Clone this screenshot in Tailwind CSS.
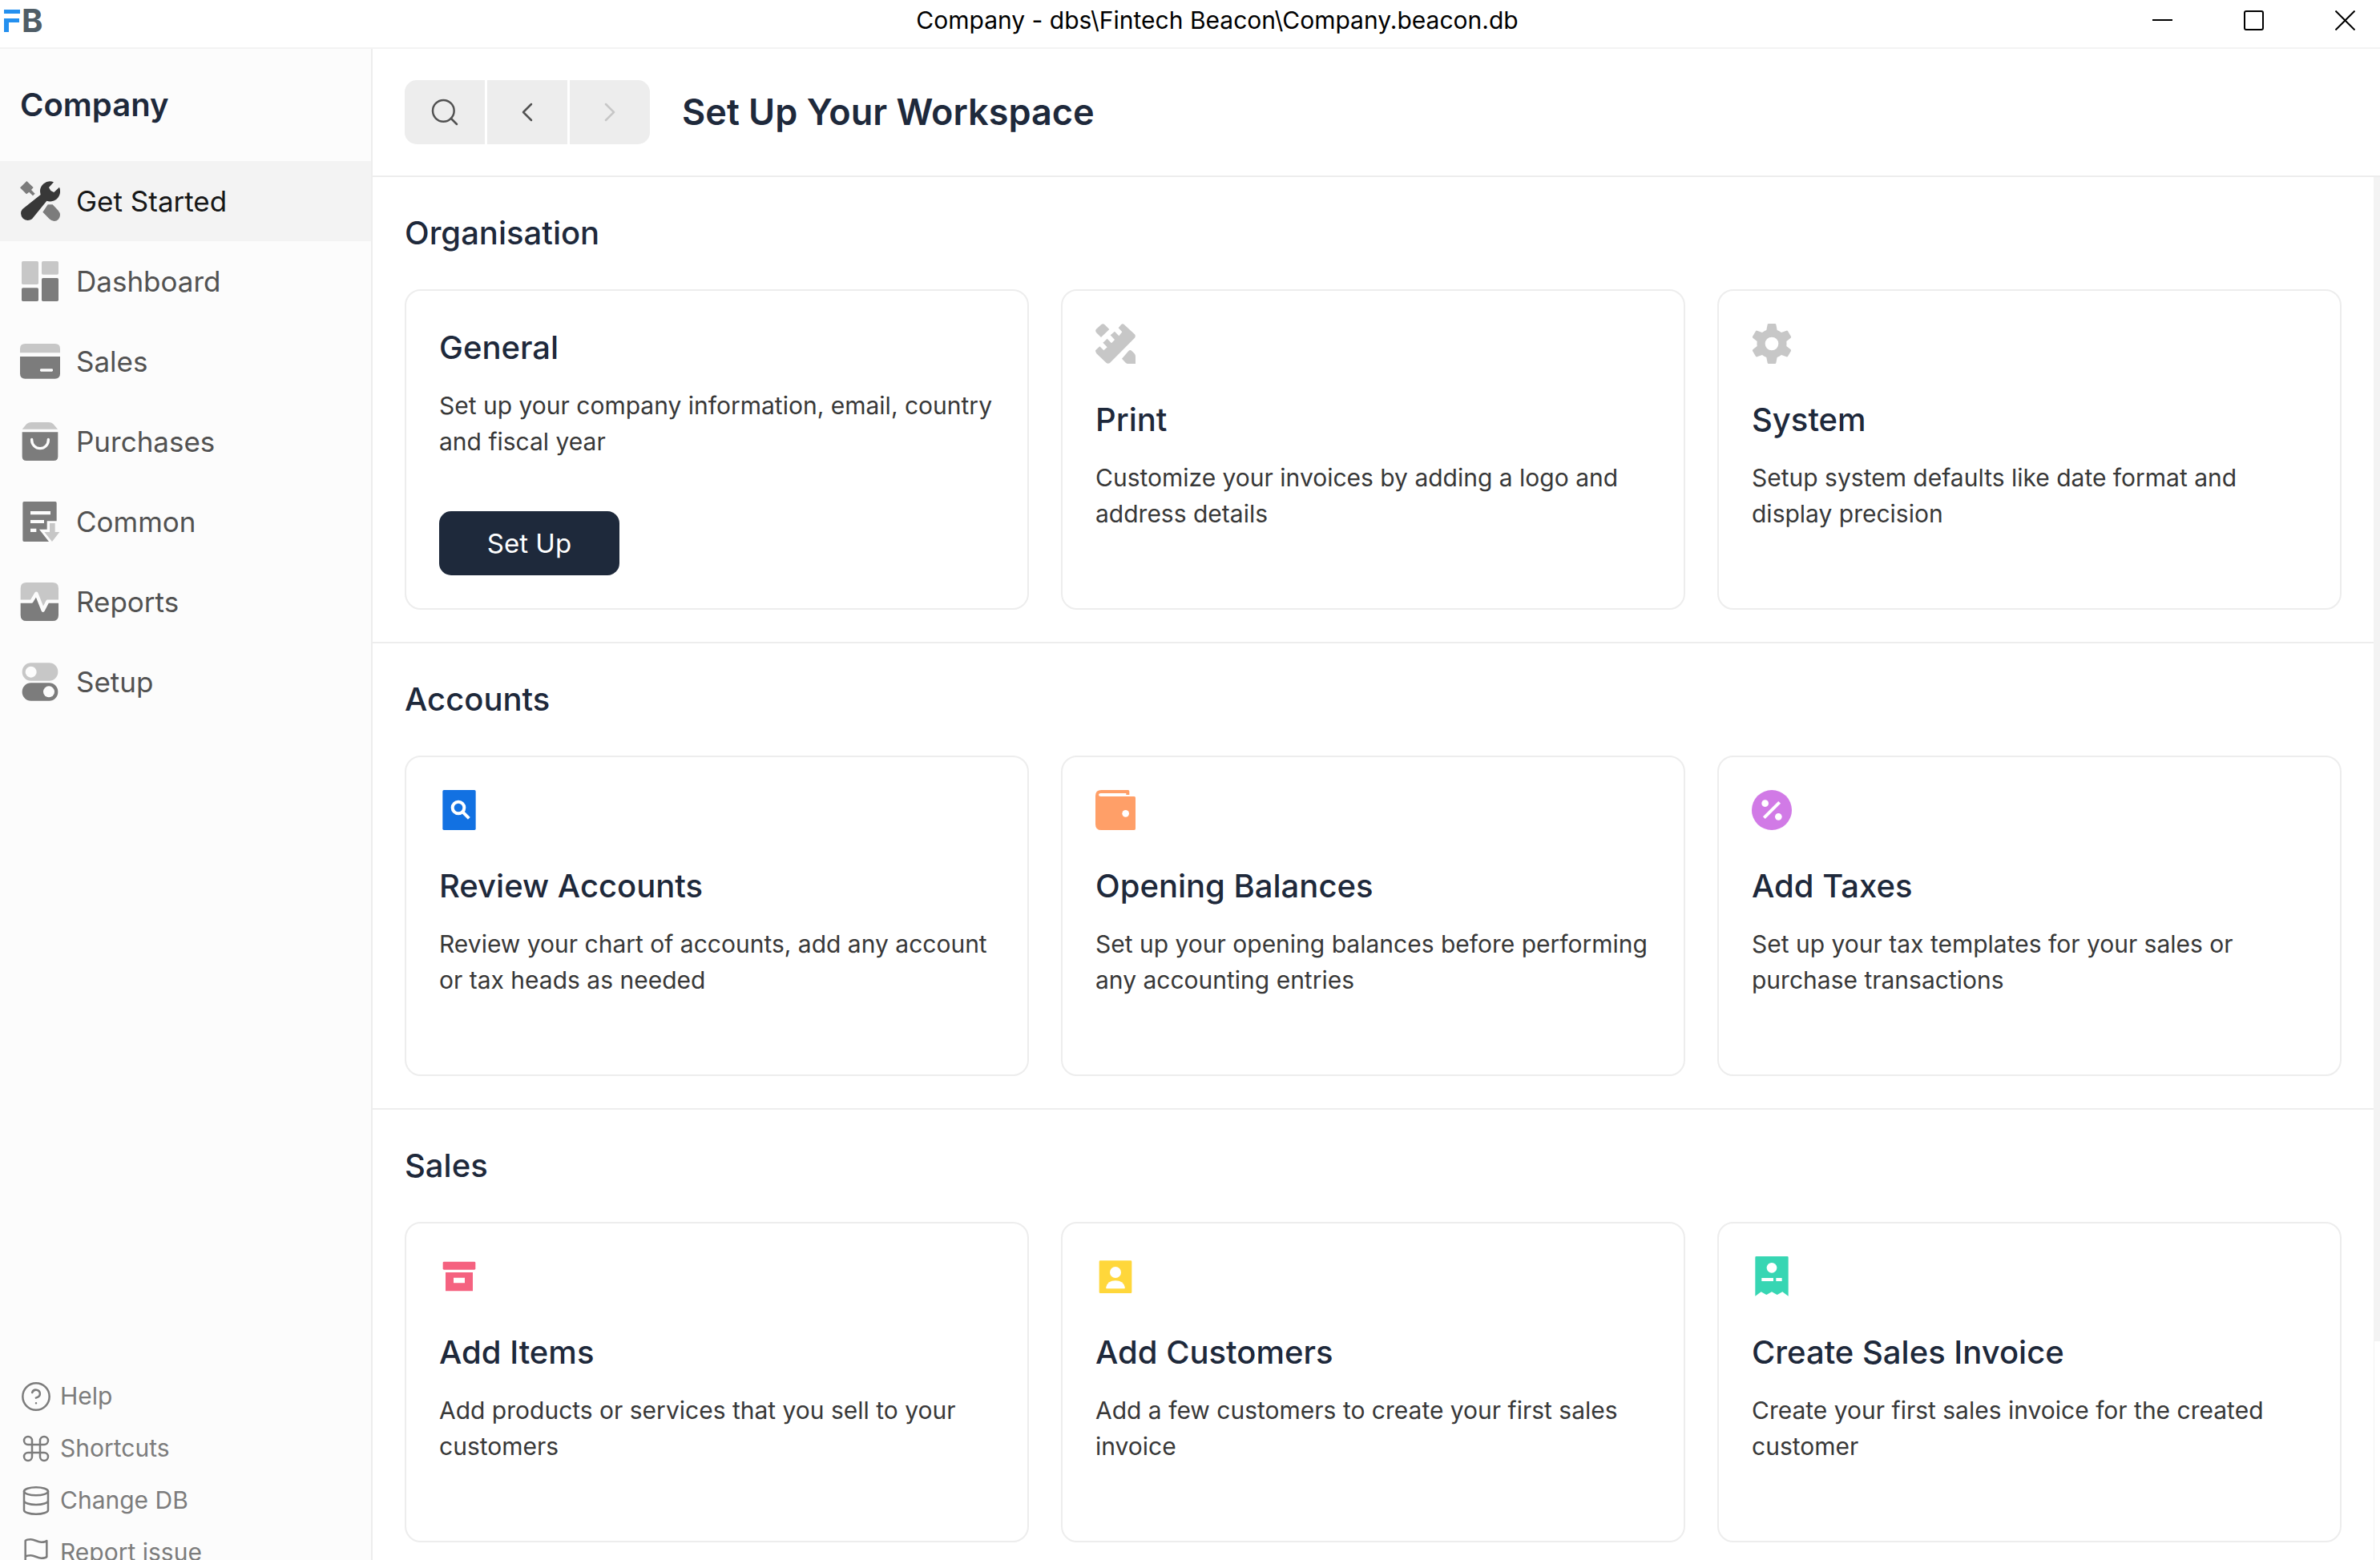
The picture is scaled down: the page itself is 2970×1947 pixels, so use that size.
<!DOCTYPE html>
<html lang="en">
<head>
<meta charset="utf-8">
<meta name="viewport" content="width=device-width, initial-scale=1">
<title>Company</title>
<script src="https://cdn.jsdelivr.net/npm/@tailwindcss/browser@4"></script>
</head>
<body class="flex h-screen flex-col overflow-hidden bg-white font-[Inter,sans-serif] text-[30px] leading-[45px] text-[#383838]">

<!-- Window title bar -->
<header class="relative flex h-[61px] shrink-0 items-center border-b-2 border-[#f3f3f3] pb-2 text-black">
  <div class="flex w-[68px] shrink-0 items-center gap-[2px] pl-[5px]" aria-label="Fintech Beacon">
    <svg class="h-7 w-5" viewBox="0 0 20 28" fill="#2490ef" aria-hidden="true"><rect width="20" height="5"/><path d="M0 11H19V16H6V28H0Z"/></svg>
    <span class="text-[40px] font-bold text-[#505d66]">B</span>
  </div>
  <div class="flex-1 text-center">Company - dbs\Fintech Beacon\Company.beacon.db</div>
  <div class="absolute right-[31px] flex items-center gap-[89px]">
    <button class="block" aria-label="Minimize"><svg class="size-[25px]" viewBox="0 0 25 25" stroke="#000" stroke-width="2"><path d="M0 12H25"/></svg></button>
    <button class="block" aria-label="Maximize"><svg class="size-[25px]" viewBox="0 0 25 25" fill="none" stroke="#000" stroke-width="2"><rect x="1" y="1" width="23" height="23" rx="2"/></svg></button>
    <button class="block" aria-label="Close"><svg class="size-[25px]" viewBox="0 0 25 25" stroke="#000" stroke-width="2"><path d="M.5 .5L24.5 24.5M24.5 .5L.5 24.5"/></svg></button>
  </div>
</header>

<div class="flex h-screen shrink-0">

  <!-- Sidebar -->
  <aside class="flex w-[465px] shrink-0 flex-col justify-between border-r-2 border-[#ededed] bg-[#fcfcfc] pb-12">
    <div>
      <div class="flex h-[140px] items-center px-[25px] pb-[2px] text-[40px] font-semibold text-[#1e293b]">Company</div>
      <nav class="flex flex-col text-[35px] text-[#525252]">
        <a href="#" class="flex h-[100px] items-center gap-5 bg-[#f3f3f3] px-[25px] text-[#171717]">
          <svg class="size-[50px]" viewBox="0 0 150 150" aria-hidden="true"><path fill="#7c7c7c" d="M25 0L0 25L24 49L34 41L48 55L56 47L42 33L50 24ZM104 88H122L143 110Q150 118 150 127A23 23 0 0 1 128 150Q118 150 110 142L85 116Z"/><path fill="#383838" d="M126 4A37 37 0 0 0 76 46L77 51L9 105A26 26 0 0 0 45 142L100 74A37 37 0 0 0 150 37Q150 28 147 23L127 42L115 36L108 24Z"/></svg>
          Get Started</a>
        <a href="#" class="flex h-[100px] items-center gap-5 px-[25px]">
          <svg class="size-[50px]" viewBox="0 0 150 150" aria-hidden="true"><g fill="#c7c7c7"><rect x="6" width="63" height="87" rx="5"/><rect x="81" width="63" height="50" rx="5"/></g><g fill="#7c7c7c"><rect x="81" y="63" width="63" height="87" rx="5"/><rect x="6" y="100" width="63" height="50" rx="5"/></g></svg>
          Dashboard</a>
        <a href="#" class="flex h-[100px] items-center gap-5 px-[25px]">
          <svg class="size-[50px]" viewBox="0 0 150 150" aria-hidden="true"><path fill="#c7c7c7" d="M0 43V28Q0 9 19 9H131Q150 9 150 28V43Z"/><path fill="#7c7c7c" d="M0 57H150V121Q150 140 131 140H19Q0 140 0 121Z"/><rect x="75" y="103" width="48" height="10" rx="4" fill="#fcfcfc"/></svg>
          Sales</a>
        <a href="#" class="flex h-[100px] items-center gap-5 px-[25px]">
          <svg class="size-[50px]" viewBox="0 0 150 150" aria-hidden="true"><path fill="#c7c7c7" d="M8 29L25 9Q32 3 43 3H107Q118 3 124 9L141 29Z"/><path fill="#7c7c7c" d="M8 40H142V131Q142 147 126 147H24Q8 147 8 131Z"/><path d="M44 67V70A31 31 0 0 0 106 70V67" fill="none" stroke="#fcfcfc" stroke-width="10" stroke-linecap="round"/></svg>
          Purchases</a>
        <a href="#" class="flex h-[100px] items-center gap-5 px-[25px]">
          <svg class="size-[50px]" viewBox="0 0 150 150" aria-hidden="true"><path fill="#7c7c7c" d="M10 5Q10 0 15 0H132Q137 0 137 5V73H101V104H72L108 150H15Q10 150 10 145Z"/><path fill="#fcfcfc" d="M39 36H114V49H39ZM39 69H90V81H39ZM39 101H61V114H39Z"/><path fill="#c7c7c7" d="M111 81H131V114H148L120 150L91 114H111Z"/></svg>
          Common</a>
        <a href="#" class="flex h-[100px] items-center gap-5 px-[25px]">
          <svg class="size-[50px]" viewBox="0 0 150 150" aria-hidden="true"><path fill="#c7c7c7" d="M2 74V25Q2 3 24 3H122Q144 3 144 25V74H104L86 106L61 46L45 74Z"/><path fill="#7c7c7c" d="M2 74V125Q2 147 24 147H122Q144 147 144 125V74H104L86 106L61 46L45 74Z"/><path d="M0 74H43L61 44L86 107L103 74H146" fill="none" stroke="#fcfcfc" stroke-width="13" stroke-linejoin="round"/></svg>
          Reports</a>
        <a href="#" class="flex h-[100px] items-center gap-5 px-[25px]">
          <svg class="size-[50px]" viewBox="0 0 150 150" aria-hidden="true"><rect x="8" y="4" width="134" height="67" rx="33" fill="#c7c7c7"/><rect x="8" y="79" width="134" height="67" rx="33" fill="#7c7c7c"/><circle cx="41" cy="38" r="21" fill="#fcfcfc"/><circle cx="108" cy="112" r="21" fill="#fcfcfc"/></svg>
          Setup</a>
      </nav>
    </div>
    <div class="flex flex-col gap-5 px-[25px] text-[#7c7c7c]">
      <a href="#" class="flex items-center gap-[10px]"><svg class="size-10" viewBox="0 0 24 24" fill="none" stroke="currentColor" stroke-width="1.5" stroke-linecap="round" stroke-linejoin="round" aria-hidden="true"><circle cx="12" cy="12" r="10"/><path d="M9.09 9a3 3 0 0 1 5.83 1c0 2-3 3-3 3M12 17h.01"/></svg>Help</a>
      <a href="#" class="flex items-center gap-[10px]"><svg class="size-10" viewBox="0 0 24 24" fill="none" stroke="currentColor" stroke-width="1.5" stroke-linecap="round" stroke-linejoin="round" aria-hidden="true"><path d="M18 3a3 3 0 0 0-3 3v12a3 3 0 0 0 3 3 3 3 0 0 0 3-3 3 3 0 0 0-3-3H6a3 3 0 0 0-3 3 3 3 0 0 0 3 3 3 3 0 0 0 3-3V6a3 3 0 0 0-3-3 3 3 0 0 0-3 3 3 3 0 0 0 3 3h12a3 3 0 0 0 3-3 3 3 0 0 0-3-3z"/></svg>Shortcuts</a>
      <a href="#" class="flex items-center gap-[10px]"><svg class="size-10" viewBox="0 0 24 24" fill="none" stroke="currentColor" stroke-width="1.5" stroke-linecap="round" stroke-linejoin="round" aria-hidden="true"><ellipse cx="12" cy="5" rx="9" ry="3"/><path d="M21 12c0 1.66-4 3-9 3s-9-1.34-9-3M3 5v14c0 1.66 4 3 9 3s9-1.34 9-3V5"/></svg>Change DB</a>
      <a href="#" class="flex items-center gap-[10px]"><svg class="size-10" viewBox="0 0 24 24" fill="none" stroke="currentColor" stroke-width="1.5" stroke-linecap="round" stroke-linejoin="round" aria-hidden="true"><path d="M4 15s1-1 4-1 5 2 8 2 4-1 4-1V3s-1 1-4 1-5-2-8-2-4 1-4 1zM4 22v-7"/></svg>Report issue</a>
    </div>
  </aside>

  <div class="flex min-w-0 flex-1 flex-col">
    <!-- Page header -->
    <div class="flex h-40 shrink-0 items-center gap-10 border-b-2 border-[#ededed] px-10">
      <div class="flex gap-[3px] overflow-hidden rounded-[15px] text-[#525252]">
        <button class="flex h-20 w-[100px] items-center justify-center bg-[#ededed]" aria-label="Search"><svg class="size-10" viewBox="0 0 24 24" fill="none" stroke="currentColor" stroke-width="1.5" stroke-linecap="round" stroke-linejoin="round"><circle cx="11" cy="11" r="8"/><path d="M21 21l-4.35-4.35"/></svg></button>
        <button class="flex h-20 w-[100px] items-center justify-center bg-[#ededed]" aria-label="Back"><svg class="size-10" viewBox="0 0 24 24" fill="none" stroke="currentColor" stroke-width="1.5" stroke-linecap="round" stroke-linejoin="round"><path d="M15 18l-6-6 6-6"/></svg></button>
        <button class="flex h-20 w-[100px] items-center justify-center bg-[#ededed] text-[#c7c7c7]" aria-label="Forward" disabled><svg class="size-10" viewBox="0 0 24 24" fill="none" stroke="currentColor" stroke-width="1.5" stroke-linecap="round" stroke-linejoin="round"><path d="M9 18l6-6-6-6"/></svg></button>
      </div>
      <h1 class="pb-[2px] text-[45px] font-semibold text-[#1e293b]">Set Up Your Workspace</h1>
    </div>

    <div class="flex min-h-0 flex-1">
      <main class="min-w-0 flex-1 overflow-hidden">

        <section class="border-b-2 border-[#ededed] px-10 py-10">
          <h2 class="mb-10 text-[40px] leading-[60px] font-medium text-[#1e293b]">Organisation</h2>
          <div class="grid grid-cols-3 gap-10">
            <article class="flex h-[400px] flex-col items-start justify-between rounded-[20px] border-2 border-[#ededed] p-[41px]">
              <div>
                <h3 class="text-[40px] leading-[60px] font-medium text-[#1e293b]">General</h3>
                <p class="mt-5">Set up your company information, email, country and fiscal year</p>
              </div>
              <button class="h-20 w-[225px] rounded-[15px] bg-[#1e293b] text-[33px] text-white">Set Up</button>
            </article>
            <article class="h-[400px] rounded-[20px] border-2 border-[#ededed] p-[41px]">
              <svg class="mb-10 size-[50px]" viewBox="0 0 150 150" fill="#c7c7c7" aria-hidden="true"><path d="M22 3Q28 -2 34 3L52 21L21 51L3 33Q-2 26 3 20ZM0 100L16 85L31 100L44 88L28 71L44 56L60 73L72 60L56 43L72 29L88 46L100 31L86 16L96 4Q102 -2 108 4L147 40Q152 46 147 53L54 147Q47 152 41 147L4 112Q0 107 0 100ZM124 102Q130 96 136 102L146 112Q150 117 150 122V150H122Q117 150 113 146L99 131Z"/></svg>
              <h3 class="text-[40px] leading-[60px] font-medium text-[#1e293b]">Print</h3>
              <p class="mt-5">Customize your invoices by adding a logo and address details</p>
            </article>
            <article class="h-[400px] rounded-[20px] border-2 border-[#ededed] p-[41px]">
              <svg class="mb-10 size-[50px]" viewBox="0 0 150 150" fill="#c7c7c7" aria-hidden="true"><path fill-rule="evenodd" d="M63 0H87Q90 0 91 3L95 24Q103 27 111 33L130 26Q133 25 135 28L147 48Q148 51 146 53L130 66Q131 75 130 84L146 97Q148 99 147 102L135 122Q133 125 130 124L111 117Q103 123 95 126L91 147Q90 150 87 150H63Q60 150 59 147L55 126Q47 123 39 117L20 124Q17 125 15 122L3 102Q2 99 4 97L20 84Q19 75 20 66L4 53Q2 51 3 48L15 28Q17 25 20 26L39 33Q47 27 55 24L59 3Q60 0 63 0ZM75 50A25 25 0 1 0 75 100A25 25 0 1 0 75 50Z"/></svg>
              <h3 class="text-[40px] leading-[60px] font-medium text-[#1e293b]">System</h3>
              <p class="mt-5">Setup system defaults like date format and display precision</p>
            </article>
          </div>
        </section>

        <section class="border-b-2 border-[#ededed] px-10 py-10">
          <h2 class="mb-10 text-[40px] leading-[60px] font-medium text-[#1e293b]">Accounts</h2>
          <div class="grid grid-cols-3 gap-10">
            <article class="h-[400px] rounded-[20px] border-2 border-[#ededed] p-[41px]">
              <svg class="mb-10 size-[50px]" viewBox="0 0 150 150" aria-hidden="true"><rect x="13" width="124" height="150" rx="5" fill="#1271e2"/><g fill="none" stroke="#fff" stroke-width="12"><circle cx="72" cy="66" r="22"/><path d="M86 80L112 106"/></g></svg>
              <h3 class="text-[40px] leading-[60px] font-medium text-[#1e293b]">Review Accounts</h3>
              <p class="mt-5">Review your chart of accounts, add any account or tax heads as needed</p>
            </article>
            <article class="h-[400px] rounded-[20px] border-2 border-[#ededed] p-[41px]">
              <svg class="mb-10 size-[50px]" viewBox="0 0 150 150" aria-hidden="true"><path fill="#ff9f68" d="M22 0H122Q127 0 127 5V18H115V12H20Q12 12 12 18Q12 24 20 24H145Q150 24 150 29V145Q150 150 145 150H22Q0 150 0 128V22Q0 0 22 0Z"/><circle cx="113" cy="88" r="13" fill="#fff"/></svg>
              <h3 class="text-[40px] leading-[60px] font-medium text-[#1e293b]">Opening Balances</h3>
              <p class="mt-5">Set up your opening balances before performing any accounting entries</p>
            </article>
            <article class="h-[400px] rounded-[20px] border-2 border-[#ededed] p-[41px]">
              <svg class="mb-10 size-[50px]" viewBox="0 0 150 150" aria-hidden="true"><circle cx="75" cy="75" r="75" fill="#d17ae6"/><g fill="#fff"><circle cx="50" cy="50" r="13"/><circle cx="100" cy="100" r="13"/></g><path d="M46 104L104 46" stroke="#fff" stroke-width="12"/></svg>
              <h3 class="text-[40px] leading-[60px] font-medium text-[#1e293b]">Add Taxes</h3>
              <p class="mt-5">Set up your tax templates for your sales or purchase transactions</p>
            </article>
          </div>
        </section>

        <section class="border-b-2 border-[#ededed] px-10 py-10">
          <h2 class="mb-10 text-[40px] leading-[60px] font-medium text-[#1e293b]">Sales</h2>
          <div class="grid grid-cols-3 gap-10">
            <article class="h-[400px] rounded-[20px] border-2 border-[#ededed] p-[41px]">
              <svg class="mb-10 size-[50px]" viewBox="0 0 150 150" fill="#f56280" aria-hidden="true"><rect x="14" y="20" width="122" height="30" rx="4"/><path fill-rule="evenodd" d="M24 60H126V130H24ZM54 80V100H96V80Z"/></svg>
              <h3 class="text-[40px] leading-[60px] font-medium text-[#1e293b]">Add Items</h3>
              <p class="mt-5">Add products or services that you sell to your customers</p>
            </article>
            <article class="h-[400px] rounded-[20px] border-2 border-[#ededed] p-[41px]">
              <svg class="mb-10 size-[50px]" viewBox="0 0 150 150" aria-hidden="true"><rect x="14" y="16" width="122" height="122" rx="4" fill="#ffd73b"/><g fill="#fff"><circle cx="75" cy="60" r="21"/><path d="M40 121V115Q46 91 75 91Q104 91 110 115V121Z"/></g></svg>
              <h3 class="text-[40px] leading-[60px] font-medium text-[#1e293b]">Add Customers</h3>
              <p class="mt-5">Add a few customers to create your first sales invoice</p>
            </article>
            <article class="h-[400px] rounded-[20px] border-2 border-[#ededed] p-[41px]">
              <svg class="mb-10 size-[50px]" viewBox="0 0 150 150" aria-hidden="true"><path fill="#37d6b3" d="M13 4Q13 0 17 0H133Q137 0 137 4V149L115 133L95 144L75 133L55 144L35 133L13 149Z"/><g fill="#fff"><circle cx="75" cy="43" r="19"/><path d="M37 81H81V93H37ZM91 81H113V93H91Z"/></g></svg>
              <h3 class="text-[40px] leading-[60px] font-medium text-[#1e293b]">Create Sales Invoice</h3>
              <p class="mt-5">Create your first sales invoice for the created customer</p>
            </article>
          </div>
        </section>
      </main>

      <!-- Scrollbar -->
      <div class="w-2 shrink-0 border-l border-[#f3f3f3]" aria-hidden="true">
        <div class="h-[81.3%] bg-[#f3f3f3]"></div>
      </div>
    </div>
  </div>
</div>
</body>
</html>
